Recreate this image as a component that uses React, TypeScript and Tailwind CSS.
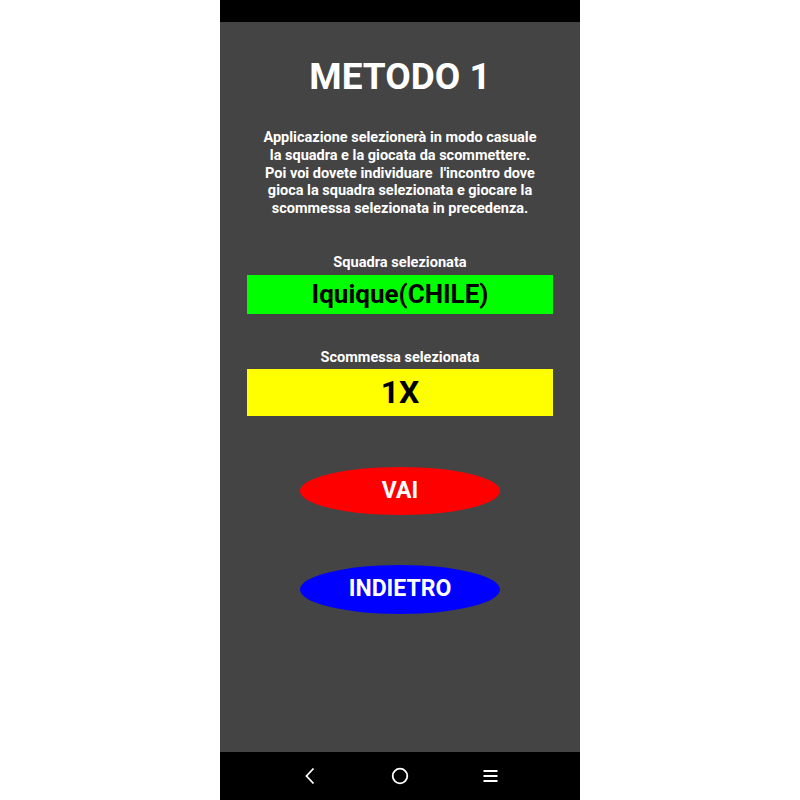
import React from "react";

export default function App() {
  return (
    <div className="w-full h-[800px] bg-white flex justify-center" style={{ fontFamily: "Roboto, 'Noto Sans', sans-serif" }}>
      <div className="w-[360px] h-[800px] flex flex-col">
        <div className="h-[22px] bg-black" />
        <div className="flex-1 bg-[#444444] flex flex-col items-center">
          <h1 className="mt-[33px] text-[37px] leading-[43px] font-bold text-white">METODO 1</h1>
          <p className="mt-[31px] w-[320px] text-center text-[14.5px] leading-[17.8px] font-bold text-white whitespace-pre">
            {"Applicazione selezionerà in modo casuale\nla squadra e la giocata da scommettere.\nPoi voi dovete individuare  l'incontro dove\ngioca la squadra selezionata e giocare la\nscommessa selezionata in precedenza."}
          </p>
          <div className="mt-[36px] text-[14.6px] leading-[17px] font-bold text-white">Squadra selezionata</div>
          <div className="mt-[4px] w-[306px] h-[39px] bg-[#00ff00] flex items-center justify-center text-[26px] font-bold text-black">
            Iquique(CHILE)
          </div>
          <div className="mt-[35px] text-[14.5px] leading-[17px] font-bold text-white">Scommessa selezionata</div>
          <div className="mt-[3px] w-[306px] h-[47px] bg-[#ffff00] flex items-center justify-center text-[32px] font-bold text-black">
            1X
          </div>
          <button className="mt-[51px] w-[200px] h-[48px] rounded-[50%] bg-[#ff0000] text-white text-[23px] font-bold flex items-center justify-center">
            VAI
          </button>
          <button className="mt-[50px] w-[200px] h-[49px] rounded-[50%] bg-[#0000ff] text-white text-[23px] font-bold flex items-center justify-center">
            INDIETRO
          </button>
        </div>
        <div className="h-[48px] bg-black flex items-center justify-center gap-[70px]">
          <div className="w-[20px] h-[20px] flex items-center justify-center">
            <svg width="12" height="18" viewBox="0 0 12 18">
              <path d="M9.5 1.5 L2.5 9 L9.5 16.5" stroke="white" strokeWidth="1.8" fill="none" />
            </svg>
          </div>
          <div className="w-[20px] h-[20px] flex items-center justify-center">
            <svg width="18" height="18" viewBox="0 0 18 18">
              <circle cx="9" cy="9" r="7.3" stroke="white" strokeWidth="1.8" fill="none" />
            </svg>
          </div>
          <div className="w-[20px] h-[20px] flex items-center justify-center">
            <svg width="15" height="14" viewBox="0 0 15 14">
              <path d="M0.5 2 H14.5 M0.5 7 H14.5 M0.5 12 H14.5" stroke="white" strokeWidth="1.8" fill="none" />
            </svg>
          </div>
        </div>
      </div>
    </div>
  );
}
